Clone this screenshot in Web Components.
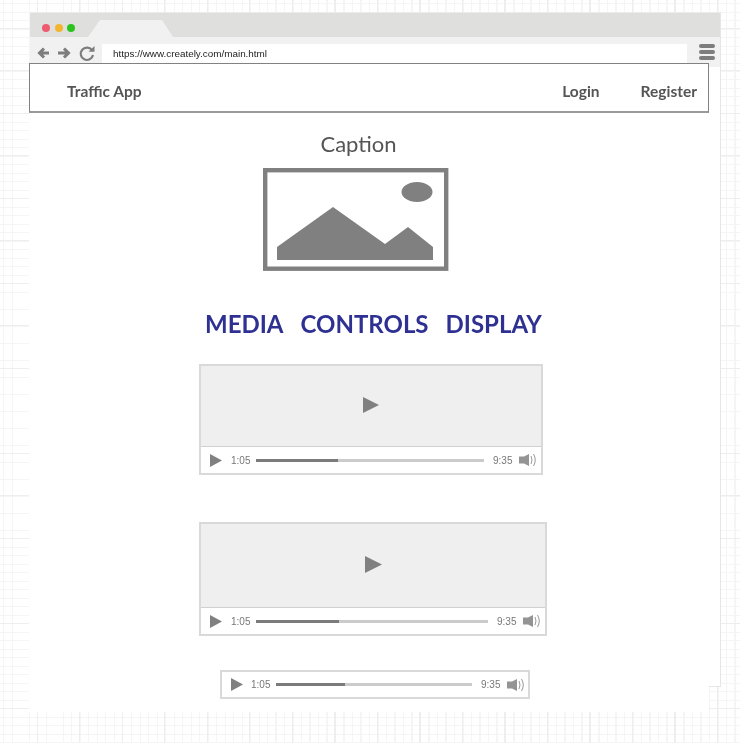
<!DOCTYPE html>
<html>
<head>
<meta charset="utf-8">
<title>Traffic App</title>
<style>
  html, body { margin: 0; height: 743px; overflow: hidden; }
  body {
    background-color: #fff;
    background-image:
      repeating-linear-gradient(180deg, transparent 0 28px, #eeeeee 28px 29px, transparent 29px 42.5px),
      repeating-linear-gradient(90deg, transparent 0 37px, #eeeeee 37px 38px, transparent 38px 42.5px),
      repeating-linear-gradient(180deg, transparent 0 3px, #f5f5f5 3px 4px, transparent 4px 8.5px),
      repeating-linear-gradient(90deg, transparent 0 3.5px, #f5f5f5 3.5px 4.5px, transparent 4.5px 8.5px);
    font-family: Lato, "Liberation Sans", sans-serif;
  }
</style>
</head>
<body>
<browser-window url="https://www.creately.com/main.html">
  <top-nav brand="Traffic App">
    <span>Login</span>
    <span>Register</span>
  </top-nav>
  <page-body>
    <image-block caption="Caption"></image-block>
    <media-heading></media-heading>
    <media-player style="margin:25px 0 0 170px" width="344" screen="80" track="228" done="82" big="16" big-x="162" big-y="31"></media-player>
    <media-player style="margin:47px 0 0 170px" width="348" screen="83" track="232" done="83" big="17" big-x="164" big-y="32"></media-player>
    <media-player style="margin:34px 0 0 191px" width="310" track="196" done="69" gap-l="8"></media-player>
  </page-body>
</browser-window>

<script>
class BrowserWindow extends HTMLElement {
  connectedCallback() {
    const url = this.getAttribute('url');
    this.attachShadow({ mode: 'open' });
    this.shadowRoot.innerHTML = `
      <style>
        :host {
          display: block;
          box-sizing: border-box;
          width: 691px;
          height: 675px;
          margin: 12px 0 0 30px;
          background: #fff;
          border-top: 1px solid #ececec;
          border-right: 1px solid #e6e6e6;
          border-bottom: 1px solid #e6e6e6;
        }
        .tabs { height: 24px; background: #dfe0de; display: flex; align-items: flex-end; position: relative; }
        .dots { display: flex; gap: 4.5px; padding: 0 0 5px 12px; width: 58px; box-sizing: border-box; align-self: flex-end; }
        .dots i { width: 8px; height: 8px; border-radius: 50%; flex: none; }
        .tab { display: block; margin-left: 0; }
        .bar { height: 30px; background: #f1f1f1; display: flex; align-items: flex-start; }
        .nav-btns { width: 72px; flex: none; display: flex; padding: 9px 0 0 7px; gap: 8px; box-sizing: border-box; }
        .url {
          width: 585px; height: 26px; flex: none; box-sizing: border-box; background: #fff; margin-top: 7px;
          padding: 3px 0 0 11px;
          font: 9.9px/13px "Liberation Sans", sans-serif; color: #222;
        }
        .url span { will-change: opacity; display: inline-block; }
        .menu { display: flex; flex-direction: column; gap: 2px; padding: 7px 0 0 12px; }
        .menu i { width: 16px; height: 4px; border-radius: 2px; background: #7d7d7d; }
      </style>
      <div class="tabs">
        <div class="dots">
          <i style="background:#ee5a6f"></i><i style="background:#f3b52f"></i><i style="background:#2cc31f"></i>
        </div>
        <svg class="tab" width="85" height="17" viewBox="0 0 85 17"><polygon points="0,17 12,0 74,0 85,17" fill="#f1f1f1"/></svg>
      </div>
      <div class="bar">
        <div class="nav-btns">
          <svg width="13" height="14" viewBox="0 0 13 14"><path d="M12 7H3M7 2.5 2.5 7 7 11.5" fill="none" stroke="#7d7d7d" stroke-width="3"/></svg>
          <svg width="13" height="14" viewBox="0 0 13 14"><path d="M0 7h10M6 2.5 10.5 7 6 11.5" fill="none" stroke="#7d7d7d" stroke-width="3"/></svg>
          <svg width="16" height="16" viewBox="0 0 16 16"><path d="M13 4.2A6.2 6.2 0 1 0 14 9" fill="none" stroke="#7d7d7d" stroke-width="2.2"/><polygon points="9.5,5.8 15.5,5.8 15.5,0" fill="#7d7d7d"/></svg>
        </div>
        <div class="url"><span>${url}</span></div>
        <div class="menu"><i></i><i></i><i></i></div>
      </div>
      <slot></slot>
    `;
  }
}
customElements.define('browser-window', BrowserWindow);

class TopNav extends HTMLElement {
  connectedCallback() {
    this.attachShadow({ mode: 'open' });
    this.shadowRoot.innerHTML = `
      <style>
        :host {
          display: flex;
          box-sizing: border-box;
          position: relative;
          width: 680px;
          height: 50px;
          margin: -4px 0 0 -1px;
          padding: 7px 11px 0 37px;
          align-items: center;
          background: #fff;
          border: 1px solid #828282;
          border-bottom-color: #9a9a9a;
          border-bottom-width: 2px;
          font: 700 15.5px Lato, sans-serif;
          color: #555;
        }
        .brand { flex: 1; will-change: opacity; }
        .links { display: flex; gap: 41px; will-change: opacity; }
      </style>
      <div class="brand">${this.getAttribute('brand')}</div>
      <div class="links"><slot></slot></div>
    `;
  }
}
customElements.define('top-nav', TopNav);

class PageBody extends HTMLElement {
  connectedCallback() {
    this.attachShadow({ mode: 'open' });
    this.shadowRoot.innerHTML = `
      <style>
        :host {
          display: block;
          box-sizing: border-box;
          width: 680px;
          height: 599px;
          margin-left: -1px;
          position: relative;
          background: #fff;
        }
      </style>
      <slot></slot>
    `;
  }
}
customElements.define('page-body', PageBody);

class ImageBlock extends HTMLElement {
  connectedCallback() {
    this.attachShadow({ mode: 'open' });
    this.shadowRoot.innerHTML = `
      <style>
        :host { display: block; padding-top: 17px; }
        .cap { font: 400 22px/27px Lato, sans-serif; color: #555; text-align: center; width: 659px; font-feature-settings: "liga" 1, "dlig" 1; will-change: opacity; }
        svg { display: block; margin: 11px 0 0 234px; }
      </style>
      <div class="cap">${this.getAttribute('caption')}</div>
      <svg width="186" height="103" viewBox="0 0 186 103">
        <rect x="2.2" y="2.2" width="181" height="98.5" fill="#fff" stroke="#808080" stroke-width="4.4"/>
        <polygon points="14,79 70,39 122,76 145,59 170,79 170,92 14,92" fill="#808080"/>
        <ellipse cx="154" cy="24" rx="15.5" ry="10" fill="#808080"/>
      </svg>
    `;
  }
}
customElements.define('image-block', ImageBlock);

class MediaHeading extends HTMLElement {
  connectedCallback() {
    this.attachShadow({ mode: 'open' });
    this.shadowRoot.innerHTML = `
      <style>
        :host {
          display: flex;
          gap: 17px;
          margin: 38px 0 0 176px;
          font: 700 24px/30px Lato, sans-serif;
          color: #2e3192;
          will-change: opacity;
        }
      </style>
      <span>MEDIA</span><span>CONTROLS</span><span>DISPLAY</span>
    `;
  }
}
customElements.define('media-heading', MediaHeading);

class MediaPlayer extends HTMLElement {
  connectedCallback() {
    const a = n => this.getAttribute(n);
    const screen = a('screen');
    const gapL = a('gap-l') || 9;
    const big = a('big');
    this.attachShadow({ mode: 'open' });
    this.shadowRoot.innerHTML = `
      <style>
        :host {
          display: block;
          box-sizing: border-box;
          width: ${a('width')}px;
          border: 2px solid #d9d9d9;
          background: #fff;
        }
        .screen { height: ${screen}px; background: #efefef; border-bottom: 1px solid #d0d0d0; position: relative; }
        .big { position: absolute; left: ${a('big-x')}px; top: ${a('big-y')}px; }
        .ctl { height: ${screen ? 26 : 25}px; display: flex; align-items: center; padding-left: 9px; font: 10px "Liberation Sans", sans-serif; color: #777; }
        .ctl svg { flex: none; display: block; }
        .ctl span { will-change: opacity; }
        .t1 { margin-left: ${gapL}px; width: 20px; }
        .track { width: ${a('track')}px; height: 3px; margin: 0 9px 0 5px; background: #cbcbcb; flex: none; }
        .track i { display: block; width: ${a('done')}px; height: 100%; background: #7b7b7b; }
        .t2 { width: 20px; }
        .vol { margin-left: 6px; }
      </style>
      ${screen ? `<div class="screen"><svg class="big" width="${big}" height="${big}" viewBox="0 0 18 18"><polygon points="0,0 18,9 0,18" fill="#808080"/></svg></div>` : ''}
      <div class="ctl">
        <svg width="12" height="13" viewBox="0 0 12 13"><polygon points="0,0 12,6.5 0,13" fill="#808080"/></svg>
        <span class="t1">1:05</span>
        <div class="track"><i></i></div>
        <span class="t2">9:35</span>
        <svg class="vol" width="18" height="14" viewBox="0 0 18 14">
          <path d="M0 3.5h5L10 1v12L5 10.5H0z" fill="#949494"/>
          <path d="M12 3q2 4 0 8M14.5 1q3.5 6 0 12" fill="none" stroke="#999" stroke-width="1"/>
        </svg>
      </div>
    `;
  }
}
customElements.define('media-player', MediaPlayer);
</script>
</body>
</html>
